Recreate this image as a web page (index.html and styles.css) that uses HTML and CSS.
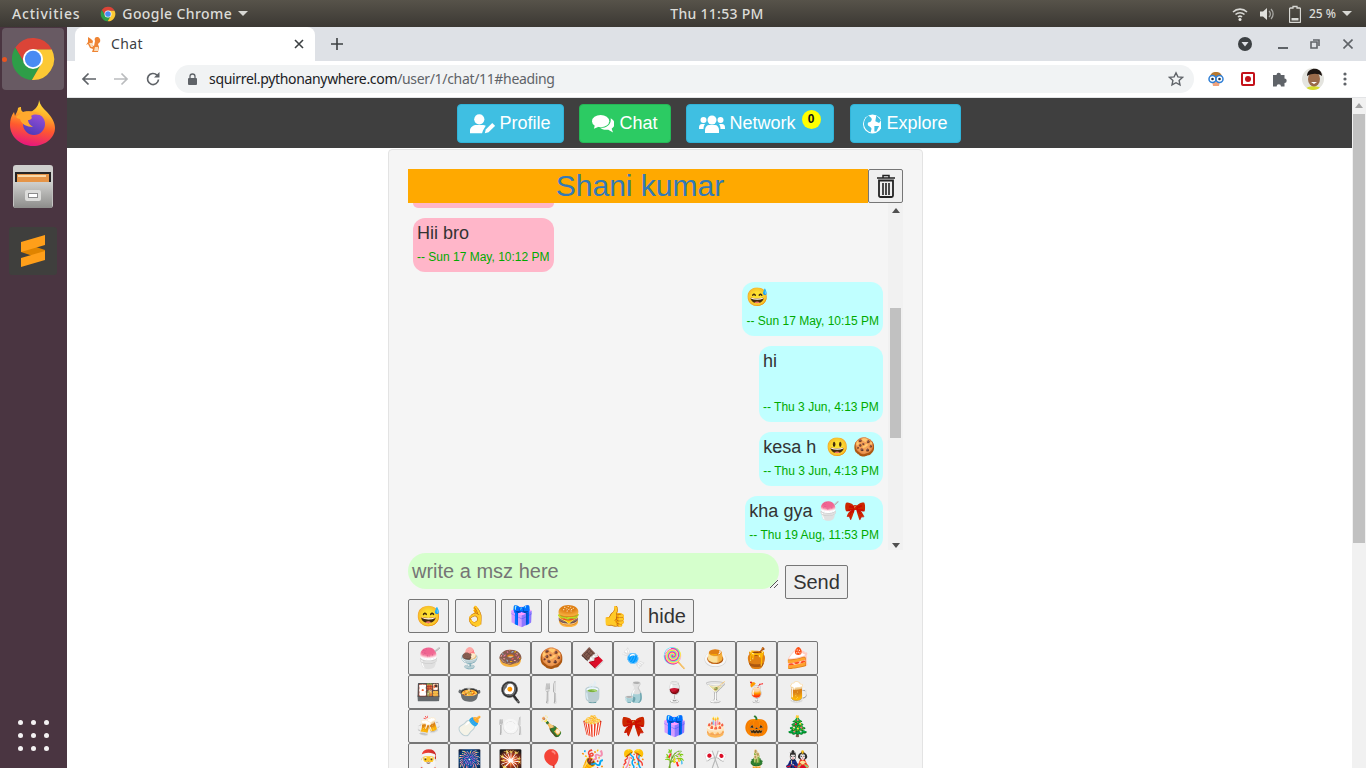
FILE: index.html
```html
<!DOCTYPE html>
<html lang="en">
<head><meta charset="utf-8"><title>Chat</title><link rel="stylesheet" href="styles.css"></head>
<body>
<header class="panel">
  <div class="panel-left"><span class="activities">Activities</span>
    <svg class="chrome-mini" viewBox="0 0 48 48"><use href="#chrome"/></svg>
    <span class="appname">Google Chrome</span><i class="caret"></i></div>
  <div class="clock">Thu 11:53 PM</div>
  <div class="panel-right">
    <svg width="16" height="16" viewBox="0 0 16 16"><path d="M1 6a10 10 0 0 1 14 0M3.500 8.500a6.500 6.500 0 0 1 9 0M6 11a3 3 0 0 1 4 0" fill="none" stroke="#d8d8d4" stroke-width="1.600"/><circle cx="8" cy="13.500" r="1.500" fill="#e8e8e4"/></svg>
    <svg width="16" height="16" viewBox="0 0 16 16"><path d="M1 5.500h3l4-3.500v12l-4-3.500H1z" fill="#e0e0dc"/><path d="M10 5a4 4 0 0 1 0 6M12 3a7 7 0 0 1 0 10" fill="none" stroke="#a8a8a4" stroke-width="1.300"/></svg>
    <svg class="batt" width="12" height="18" viewBox="0 0 12 18"><path d="M4 1.500h4v1.500h2.500a1 1 0 0 1 1 1v12.500a1 1 0 0 1-1 1h-9a1 1 0 0 1-1-1V4a1 1 0 0 1 1-1H4z" fill="none" stroke="#d8d8d4" stroke-width="1.300"/><rect x="2.500" y="13" width="7" height="2.500" fill="#d8d8d4"/></svg>
    <span class="pct">25 %</span><i class="caret"></i></div>
</header>
<div class="desk">
  <nav class="dock">
    <div class="dock-item active"><b class="dot"></b><svg width="46" height="46" viewBox="0 0 48 48"><use href="#chrome"/></svg></div>
    <div class="dock-item"><svg width="46" height="46" viewBox="0 0 46 46">
      <defs><linearGradient id="fx" x1="0.600" y1="0" x2="0.400" y2="1"><stop offset="0" stop-color="#ffe23d"/><stop offset=".3" stop-color="#ffb22a"/><stop offset=".6" stop-color="#ff5a2e"/><stop offset="1" stop-color="#e6157f"/></linearGradient>
      <linearGradient id="fp" x1="0.700" y1="0" x2="0.300" y2="1"><stop offset="0" stop-color="#9a4fd8"/><stop offset="1" stop-color="#4b3ab8"/></linearGradient></defs>
      <path d="M29 0c1 5 4 8 8 12 5 5 8 11 8 16 0 10-10 18-22 18S0 37 0 25c0-5 1-9 4-13l1 4c1-3 3-5 3-8 1-1 2-1 3-1 0 2 0 4 2 5 2-1 5-1 8 0 5-3 8-7 8-12z" fill="url(#fx)"/>
      <circle cx="24" cy="24" r="11" fill="url(#fp)"/>
      <path d="M6 17c4-4 12-7 20-5 3 1 6 3 7 5-4-3-9-3-12-1 2 2 0 4-3 4 0 3 2 5 5 7-6 0-12-3-13-8-1 0-3-1-4-2z" fill="#ffa92e"/></svg></div>
    <div class="dock-item"><svg width="46" height="46" viewBox="0 0 46 46">
      <defs><linearGradient id="cab" x1="0" y1="0" x2="0" y2="1"><stop offset="0" stop-color="#d0d0ce"/><stop offset="1" stop-color="#8d8d8b"/></linearGradient></defs>
      <rect x="3" y="1" width="40" height="43" rx="3" fill="#cfcfcd"/><rect x="5" y="8" width="36" height="10" fill="#262424"/><rect x="7" y="10" width="32" height="8" fill="#e59447"/><rect x="8" y="11" width="28" height="2" fill="#f9d9a9"/><path d="M3 18h40l-1 26H4z" fill="url(#cab)"/><rect x="15" y="26" width="16" height="11" rx="2" fill="#dcdcda"/><rect x="18" y="29" width="10" height="5" fill="#8c8c8c"/><rect x="19" y="30" width="8" height="3" fill="#fff"/></svg></div>
    <div class="dock-item"><svg width="48" height="48" viewBox="0 0 48 48"><rect width="48" height="48" rx="3" fill="#3f3f3d"/><path d="M12 15v10l24 8V23z" fill="#e08400"/><path d="M36 8v10l-24 7V15zM36 24v9l-24 7v-9z" fill="#ff9f1a"/></svg></div>
    <div class="apps"><i></i><i></i><i></i><i></i><i></i><i></i><i></i><i></i><i></i></div>
  </nav>
  <div class="browser">
    <div class="tabstrip">
      <div class="tab">
        <svg class="favicon" width="17" height="17" viewBox="0 0 17 17"><path d="M2 1l3 2 2 2-1 4 2 1 1-5c-1-2 0-4 2-4s4 2 3 5l-2 2 1 3-1 5H6l1-3-3-1-2-4-2 1 2-3z" fill="#ee8434"/><path d="M3 7h3l1 4H5zM9 11h3v4H8z" fill="#fbdcb8"/></svg>
        <span class="tab-title">Chat</span>
        <svg class="tab-x" width="10" height="10" viewBox="0 0 10 10"><path d="M1 1l8 8M9 1l-8 8" stroke="#3c4043" stroke-width="1.600"/></svg>
      </div>
      <svg class="plus" width="12" height="12" viewBox="0 0 12 12"><path d="M6 0v12M0 6h12" stroke="#3c4043" stroke-width="1.600"/></svg>
      <div class="win-ctrl">
        <svg width="14" height="14" viewBox="0 0 14 14"><circle cx="7" cy="7" r="7" fill="#3c4043"/><path d="M3.500 5h7L7 9.500z" fill="#dee1e6"/></svg>
        <svg class="min" width="10" height="10" viewBox="0 0 10 10"><rect y="8" width="10" height="2" fill="#5f6368"/></svg>
        <svg class="max" width="10" height="10" viewBox="0 0 10 10"><path d="M3 1h6v6M1 3h6v6H1z" fill="none" stroke="#5f6368" stroke-width="1.600"/></svg>
        <svg class="cls" width="10" height="10" viewBox="0 0 10 10"><path d="M.5.500l9 9M9.500.500l-9 9" stroke="#5f6368" stroke-width="1.600"/></svg>
      </div>
    </div>
    <div class="toolbar">
      <svg width="16" height="14" viewBox="0 0 16 14"><path d="M15 7H2M7.500 1.500L2 7l5.500 5.500" fill="none" stroke="#5f6368" stroke-width="1.700"/></svg>
      <svg width="16" height="14" viewBox="0 0 16 14"><path d="M1 7h13M8.500 1.500L14 7l-5.500 5.500" fill="none" stroke="#babcbe" stroke-width="1.700"/></svg>
      <svg width="16" height="16" viewBox="0 0 16 16"><path d="M13.500 8.500A5.500 5.500 0 1 1 12 4.200" fill="none" stroke="#5f6368" stroke-width="1.700"/><path d="M14.500 1v5.500H9z" fill="#5f6368"/></svg>
      <div class="omnibox">
        <svg width="9" height="12" viewBox="0 0 9 12"><path d="M2 5V3.500a2.500 2.500 0 0 1 5 0V5" fill="none" stroke="#5f6368" stroke-width="1.300"/><rect y="5" width="9" height="7" rx="1" fill="#5f6368"/></svg>
        <span class="url">squirrel.pythonanywhere.com<span class="url-path">/user/1/chat/11#heading</span></span>
        <svg class="star" width="16" height="16" viewBox="0 0 16 16"><path d="M8 1.800l1.900 4.100 4.500.5-3.300 3 .9 4.500L8 11.700l-4 2.200.9-4.500-3.300-3 4.500-.5z" fill="none" stroke="#5f6368" stroke-width="1.400"/></svg>
      </div>
      <div class="ext">
        <svg width="16" height="18" viewBox="0 0 16 18"><path d="M2 8C2 3 5 2 8 2s6 1 6 6z" fill="#b7772c"/><path d="M4 11h8l-1 5H5z" fill="#f0a27c"/><circle cx="4.500" cy="9" r="3.500" fill="#fff" stroke="#2f7fd6" stroke-width="1.500"/><circle cx="11.500" cy="9" r="3.500" fill="#fff" stroke="#2f7fd6" stroke-width="1.500"/><circle cx="4.500" cy="9" r="1.300" fill="#234"/><circle cx="11.500" cy="9" r="1.300" fill="#234"/></svg>
        <svg width="14" height="14" viewBox="0 0 14 14"><rect x="1" y="1" width="12" height="12" rx="1" fill="#fff" stroke="#c4121a" stroke-width="2"/><circle cx="7" cy="7" r="3" fill="#c4121a"/></svg>
        <svg width="16" height="16" viewBox="0 0 16 16"><path d="M1 4h3.500a2.200 2.200 0 1 1 4.400 0H12.500v3.500a2.200 2.200 0 1 1 0 4.400V15.500H9a2.200 2.200 0 1 0-4.400 0H1z" fill="#5f6368"/></svg>
        <svg class="avatar" width="22" height="22" viewBox="0 0 22 22"><clipPath id="av"><circle cx="11" cy="11" r="11"/></clipPath><g clip-path="url(#av)"><rect width="22" height="22" fill="#e4e4df"/><path d="M3 22c1-5 16-5 17 0z" fill="#d6dc2c"/><ellipse cx="12" cy="11" rx="6" ry="7.500" fill="#9a6a4a"/><path d="M5 8c0-9 15-10 15 0-4-3-10-3-15 0z" fill="#1d1512"/><path d="M9 14h6l-3 2z" fill="#fff"/></g></svg>
        <svg width="4" height="16" viewBox="0 0 4 16"><circle cx="2" cy="3" r="1.600" fill="#5f6368"/><circle cx="2" cy="8" r="1.600" fill="#5f6368"/><circle cx="2" cy="13" r="1.600" fill="#5f6368"/></svg>
      </div>
    </div>
    <div class="viewport">
      <main class="page">
        <div class="topnav">
          <a class="btn info btn-profile"><svg width="28" height="22" viewBox="0 0 28 22"><circle cx="10" cy="6" r="5.500" fill="#fff"/><path d="M0 21v-3c0-4 4-6 7-6h6c2 0 3 .5 4 1l-3 5-1 3z" fill="#fff"/><path d="M16 21l1-4 7-7 3 3-7 7z" fill="#fff"/></svg>Profile</a>
          <a class="btn success btn-chat"><svg width="24" height="20" viewBox="0 0 24 20"><ellipse cx="9" cy="7" rx="9" ry="6.500" fill="#fff"/><path d="M3 11l-1 4 5-2z" fill="#fff"/><path d="M19.500 4c3 1.500 4.500 4 4 7-.3 1.500-1.500 3-3 4l1.500 4-5-3c-4 .5-7-.5-8.500-2 6 .5 12-3 11-10z" fill="#fff"/></svg>Chat</a>
          <a class="btn info btn-network"><svg width="26" height="18" viewBox="0 0 26 18"><circle cx="13" cy="5" r="4.500" fill="#fff"/><path d="M6 18v-3c0-3 2-5 4-5h6c2 0 4 2 4 5v3z" fill="#fff"/><circle cx="4.500" cy="5" r="3" fill="#fff"/><circle cx="21.500" cy="5" r="3" fill="#fff"/><path d="M0 13c0-3 1-4 3-4h3c-1 1-1.500 3-1.500 5H0zM26 13c0-3-1-4-3-4h-3c1 1 1.500 3 1.500 5H26z" fill="#fff"/></svg>Network<span class="badge">0</span></a>
          <a class="btn info btn-explore"><svg width="20" height="20" viewBox="0 0 20 20"><circle cx="10" cy="10" r="10" fill="#fff"/><path d="M6 1c1 2 4 2 3 5s-4 1-4 4 3 2 4 5l-1 4-2-1c-3-2-5-5-5-8 0-4 2-7 5-9zM14 1l5 5-2 3-4-2zM12 12h5l-3 6h-2z" fill="#3fbfe2"/></svg>Explore</a>
        </div>
        <section class="well">
          <div class="heading"><h2 class="name">Shani kumar</h2><button class="trash"><svg width="20" height="24" viewBox="0 0 20 24"><path d="M7 3.500V1.500h6V3.500M1 4h18" fill="none" stroke="#222" stroke-width="1.500"/><path d="M3 6.500h14v15a1.500 1.500 0 0 1-1.500 1.500h-11A1.500 1.500 0 0 1 3 21.500z" fill="none" stroke="#222" stroke-width="1.800"/><path d="M7 9v12M10 9v12M13 9v12" stroke="#222" stroke-width="1.600"/></svg></button></div>
          <div class="chatbox">
            <div class="messages">
              <div class="stub"></div>
              <div class="msg them">Hii bro<small>-- Sun 17 May, 10:12 PM</small></div>
              <div class="msg me">😅<small>-- Sun 17 May, 10:15 PM</small></div>
              <div class="msg me tall">hi<small>-- Thu 3 Jun, 4:13 PM</small></div>
              <div class="msg me">kesa h &nbsp;😃 🍪<small>-- Thu 3 Jun, 4:13 PM</small></div>
              <div class="msg me">kha gya 🍧 <span class="red">🎀</span><small>-- Thu 19 Aug, 11:53 PM</small></div>
            </div>
            <div class="bar"><i class="up"></i><b class="thumb"></b><i class="down"></i></div>
          </div>
          <div class="composer"><div class="input">write a msz here<svg class="grip" width="8" height="8" viewBox="0 0 8 8"><path d="M0 8l8-8M4 8l4-4" stroke="#555" stroke-width="1"/></svg></div><button class="send">Send</button></div>
          <div class="quick"><button>😅</button><button>👌</button><button><span class="blue">🎁</span></button><button>🍔</button><button>👍</button><button class="hide">hide</button></div>
          <div class="grid">
            <button>🍧</button><button>🍨</button><button>🍩</button><button>🍪</button><button>🍫</button><button><span class="blue">🍬</span></button><button>🍭</button><button>🍮</button><button>🍯</button><button>🍰</button>
            <button>🍱</button><button>🍲</button><button>🍳</button><button>🍴</button><button>🍵</button><button>🍶</button><button>🍷</button><button>🍸</button><button>🍹</button><button>🍺</button>
            <button>🍻</button><button>🍼</button><button>🍽️</button><button>🍾</button><button>🍿</button><button><span class="red">🎀</span></button><button><span class="blue">🎁</span></button><button>🎂</button><button>🎃</button><button>🎄</button>
            <button>🎅</button><button>🎆</button><button>🎇</button><button>🎈</button><button>🎉</button><button>🎊</button><button>🎋</button><button>🎌</button><button>🎍</button><button>🎎</button>
          </div>
        </section>
      </main>
      <div class="pagebar"><i></i><b></b></div>
    </div>
  </div>
</div>
<svg class="defs" width="0" height="0" viewBox="0 0 48 48"><defs><g id="chrome">
  <path d="M43.600 14A22 22 0 0 0 5.540 12.030L15.340 29 24 14z" fill="#db4437"/>
  <path d="M5.540 12.030A22 22 0 0 0 22.860 45.970L32.660 29H15.340z" fill="#2e9e48"/>
  <path d="M22.860 45.970A22 22 0 0 0 43.600 14H24L32.660 29z" fill="#fcc934"/>
  <circle cx="24" cy="24" r="10.500" fill="#fff"/><circle cx="24" cy="24" r="8.500" fill="#4a8bf3"/>
</g></defs></svg>
</body>
</html>
```
FILE: styles.css
```css
html,body{margin:0;padding:0;height:768px;overflow:hidden;}
body{font-family:"Liberation Sans",Arial,sans-serif;background:#fff;color:#333;display:flex;flex-direction:column;}
.defs{display:block;height:0;}
.panel{height:27px;flex:none;background:linear-gradient(#57534a,#3b3833);color:#dcdcd8;display:flex;align-items:center;justify-content:space-between;font:500 14px/1 "Noto Sans","Open Sans",sans-serif;position:relative;}
.panel-left{display:flex;align-items:center;padding-left:12px;}
.activities{letter-spacing:.8px;}
.appname{letter-spacing:.4px;}
.chrome-mini{width:16px;height:16px;margin:0 6px 0 20px;}
.caret{display:inline-block;width:0;height:0;border:5px solid transparent;border-top:5px solid #d8d8d4;border-bottom:0;margin-left:6px;}
.clock{position:absolute;left:68px;right:0;text-align:center;letter-spacing:.3px;pointer-events:none;}
.panel-right{display:flex;align-items:center;gap:11px;padding-right:14px;}
.batt{margin-left:3px;}
.pct{font-size:12px;margin-left:-3px;}
.panel-right .caret{margin-left:-5px;}
.desk{flex:1;display:flex;min-height:0;}
.dock{width:67px;flex:none;background:#4a3541;display:flex;flex-direction:column;align-items:center;position:relative;padding-top:1px;box-sizing:border-box;}
.dock-item{width:62px;height:62px;margin-left:-2px;margin-bottom:2px;display:flex;align-items:center;justify-content:center;border-radius:4px;position:relative;}
.dock-item.active{background:#685a63;}
.dot{position:absolute;left:0;top:29px;width:5px;height:5px;border-radius:50%;background:#e95420;}
.apps{position:absolute;bottom:17px;left:18px;display:grid;grid-template-columns:repeat(3,5px);gap:8px;}
.apps i{width:5px;height:5px;border-radius:50%;background:#f4f2f3;}
.browser{flex:1;display:flex;flex-direction:column;min-width:0;}
.tabstrip{height:34px;flex:none;background:#dee1e6;display:flex;align-items:flex-end;position:relative;}
.tab{width:240px;height:34px;margin-left:8px;background:#fff;border-radius:8px 8px 0 0;display:flex;align-items:center;box-sizing:border-box;padding:0 11px;font:14px "Noto Sans",sans-serif;letter-spacing:.4px;color:#3c4043;}
.favicon{margin-right:8px;}
.tab-title{flex:1;margin-bottom:2px;}
.plus{margin:0 0 11px 16px;}
.win-ctrl{margin-left:auto;display:flex;align-items:center;height:34px;padding-right:12px;position:relative;left:-1px;}
.min{margin-left:26px;}.max{margin-left:22px;}.cls{margin-left:23px;}
.toolbar{height:36px;flex:none;background:#fff;border-bottom:1px solid #e3e4e6;display:flex;align-items:center;padding-left:14px;gap:16px;}
.omnibox{flex:none;width:1019px;height:28px;margin-left:-2px;border-radius:14px;background:#f1f3f4;display:flex;align-items:center;padding-left:13px;box-sizing:border-box;position:relative;}
.url{margin:0 0 2px 12px;font:14px "Noto Sans",sans-serif;color:#202124;letter-spacing:-.33px;}
.url-path{color:#5f6368;}
.star{position:absolute;right:10px;top:6px;}
.ext{display:flex;align-items:center;gap:17px;margin-left:-2px;}
.avatar{margin:0 2px 0 -3px;}
.viewport{flex:1;display:flex;min-height:0;overflow:hidden;}
.page{flex:1;min-width:0;}
.topnav{height:50px;background:#3f3f3f;display:flex;justify-content:center;align-items:flex-start;padding:6px 2px 0 0;box-sizing:border-box;gap:15px;}
.btn{height:39px;box-sizing:border-box;border-radius:4px;color:#fff;display:flex;align-items:center;font-size:18px;border:1px solid;padding:0 12px;position:relative;}
.btn svg{margin-right:4px;}
.btn-chat svg,.btn-network svg,.btn-explore svg{margin-right:5px;}
.info{background:#3fbfe2;border-color:#30b3d8;}
.success{background:#2ccb63;border-color:#24b856;}
.btn-profile{width:107px;}.btn-chat{width:92px;}.btn-network{width:148px;}.btn-explore{width:111px;margin-left:1px;}
.badge{position:absolute;left:115px;top:5px;width:19px;height:19px;border-radius:50%;background:#ff0;color:#111;font-size:12px;font-weight:700;text-align:center;line-height:19px;}
.well{width:535px;margin:1px 0 0 321px;height:700px;box-sizing:border-box;background:#f5f5f5;border:1px solid #e3e3e3;border-radius:4px;padding:19px;}
.heading{display:flex;height:34px;width:495px;}
.name{flex:1;margin:0;padding-left:4px;font-weight:400;font-size:30px;line-height:33px;color:#337ab7;text-align:center;background:#ffa900;}
.trash{flex:none;width:35px;height:34px;padding:0;border:1px solid #767676;border-radius:2px;background:#efefef;display:flex;align-items:center;justify-content:center;}
.chatbox{width:495px;height:347px;display:flex;overflow:hidden;}
.messages{flex:1;display:flex;flex-direction:column;align-items:flex-start;padding:0 5px 0 5px;gap:10px;min-width:0;overflow:hidden;}
.stub{width:141px;height:5px;background:#ffb6c9;border-radius:0 0 10px 10px;flex:none;}
.msg{flex:none;box-sizing:border-box;border-radius:12px;padding:4px;height:54px;font-size:18px;line-height:22px;color:#333;background:#c0ffff;align-self:flex-end;}
.msg small{display:block;font-size:12px;line-height:14px;color:#0a0;margin-top:6px;white-space:nowrap;}
.them{background:#ffb6c9;align-self:flex-start;}
.tall{height:76px;width:124px;}
.tall small{margin-top:28px;}
.red{filter:saturate(3) hue-rotate(20deg) brightness(.9);}
.blue{filter:hue-rotate(215deg) saturate(1.5);}
.bar{width:15px;flex:none;position:relative;background:#f1f1f1;}
.bar .up,.bar .down{position:absolute;left:4px;width:0;height:0;border:4px solid transparent;}
.bar .up{top:5px;border-top:0;border-bottom:5px solid #505050;}
.bar .down{bottom:2px;border-bottom:0;border-top:5px solid #505050;}
.thumb{position:absolute;left:2px;top:105px;width:11px;height:130px;background:#c1c1c1;}
.composer{display:flex;align-items:flex-end;margin-top:3px;height:46px;}
.input{width:371px;height:36px;align-self:flex-start;background:#d5ffcc;border-radius:18px;padding:4px;box-sizing:border-box;color:#757575;font-size:20px;line-height:28px;position:relative;}
.grip{position:absolute;right:1px;bottom:1px;}
.send{width:63px;height:34px;margin-left:6px;font:20px "Liberation Sans",sans-serif;color:#333;padding:0;background:#efefef;border:1px solid #767676;border-radius:2px;}
.quick{display:flex;gap:5.5px;height:34px;}
.quick button{width:41px;height:34px;padding:0;background:#efefef;border:1px solid #767676;border-radius:2px;font:20px "Liberation Sans",sans-serif;color:#333;}
.quick .hide{width:53px;font-size:20px;}
.grid{display:grid;grid-template-columns:repeat(10,41px);grid-auto-rows:34px;margin-top:8px;}
.grid button{width:41px;height:34px;padding:0;background:#efefef;border:1px solid #767676;border-radius:2px;font:20px "Liberation Sans",sans-serif;}
.pagebar{width:14px;flex:none;background:#f1f1f1;position:relative;}
.pagebar i{position:absolute;left:3px;top:5px;width:0;height:0;border:4px solid transparent;border-top:0;border-bottom:5px solid #a3a3a3;}
.pagebar b{position:absolute;left:1px;top:16px;width:12px;height:429px;background:#c1c1c1;}
```
